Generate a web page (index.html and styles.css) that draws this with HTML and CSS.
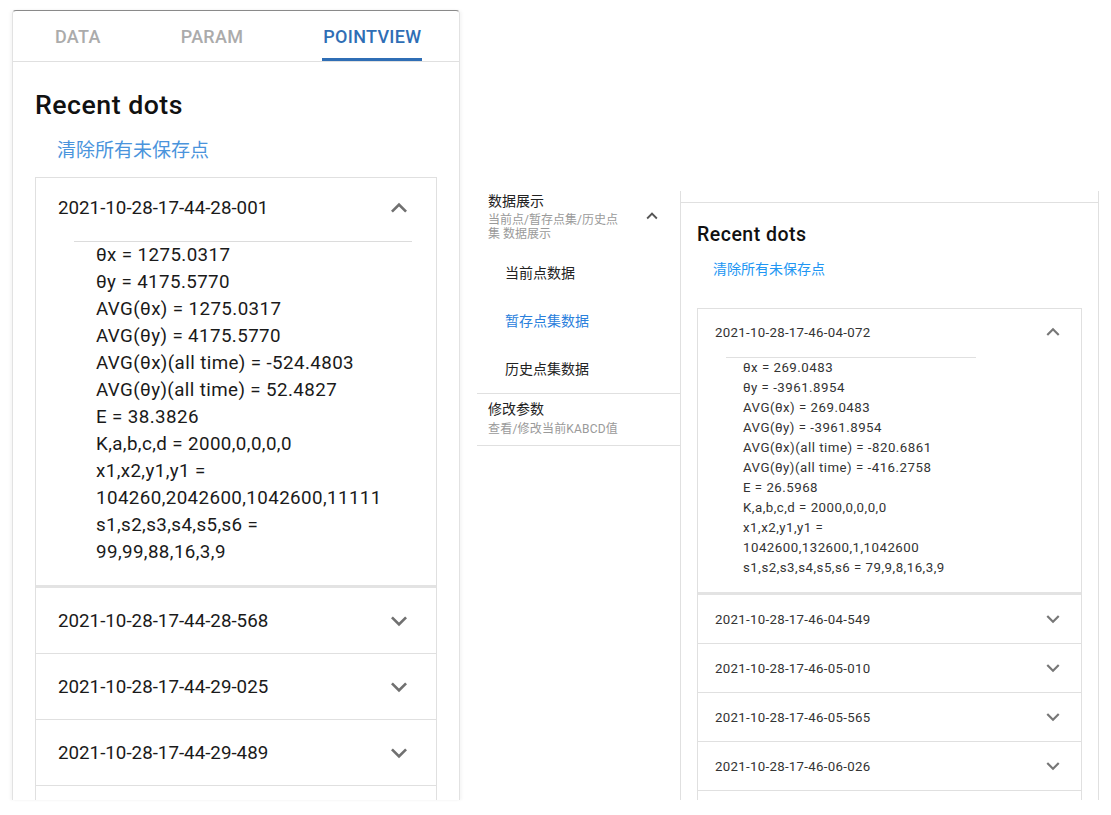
FILE: index.html
```html
<!DOCTYPE html>
<html lang="zh-CN">
<head>
<meta charset="utf-8">
<title>Recent dots</title>
<link rel="stylesheet" href="styles.css">
</head>
<body>
<div class="stage">
  <section class="phone">
    <nav class="tabs">
      <div class="tab">DATA</div>
      <div class="tab">PARAM</div>
      <div class="tab active">POINTVIEW</div>
    </nav>
    <div class="phone-body">
      <h1 class="title-lg">Recent dots</h1>
      <a class="link-lg">清除所有未保存点</a>
      <div class="acc-lg">
        <div class="acc-lg-open">
          <div class="acc-lg-head">
            <span>2021-10-28-17-44-28-001</span>
            <svg class="chev-lg" viewBox="0 0 24 24"><path d="M12 8l-6 6 1.41 1.41L12 10.83l4.59 4.58L18 14z"/></svg>
          </div>
          <div class="acc-lg-rule"></div>
          <div class="acc-lg-body">
            <div>θx = 1275.0317</div>
            <div>θy = 4175.5770</div>
            <div>AVG(θx) = 1275.0317</div>
            <div>AVG(θy) = 4175.5770</div>
            <div>AVG(θx)(all time) = -524.4803</div>
            <div>AVG(θy)(all time) = 52.4827</div>
            <div>E = 38.3826</div>
            <div>K,a,b,c,d = 2000,0,0,0,0</div>
            <div>x1,x2,y1,y1 =</div>
            <div>104260,2042600,1042600,11111</div>
            <div>s1,s2,s3,s4,s5,s6 =</div>
            <div>99,99,88,16,3,9</div>
          </div>
        </div>
        <div class="acc-lg-item"><span>2021-10-28-17-44-28-568</span><svg class="chev-lg" viewBox="0 0 24 24"><path d="M16.59 8.59L12 13.17 7.41 8.59 6 10l6 6 6-6z"/></svg></div>
        <div class="acc-lg-item"><span>2021-10-28-17-44-29-025</span><svg class="chev-lg" viewBox="0 0 24 24"><path d="M16.59 8.59L12 13.17 7.41 8.59 6 10l6 6 6-6z"/></svg></div>
        <div class="acc-lg-item"><span>2021-10-28-17-44-29-489</span><svg class="chev-lg" viewBox="0 0 24 24"><path d="M16.59 8.59L12 13.17 7.41 8.59 6 10l6 6 6-6z"/></svg></div>
        <div class="acc-lg-item"></div>
      </div>
    </div>
  </section>

  <aside class="menu">
    <div class="menu-group">
      <div class="menu-head">
        <div class="menu-text">
          <div class="menu-title">数据展示</div>
          <div class="menu-sub menu-sub-wrap">当前点/暂存点集/历史点集 数据展示</div>
        </div>
        <svg class="chev-md" viewBox="0 0 24 24"><path d="M12 8l-6 6 1.41 1.41L12 10.83l4.59 4.58L18 14z"/></svg>
      </div>
      <div class="menu-item">当前点数据</div>
      <div class="menu-item selected">暂存点集数据</div>
      <div class="menu-item">历史点集数据</div>
    </div>
    <div class="menu-group2">
      <div class="menu-title">修改参数</div>
      <div class="menu-sub">查看/修改当前KABCD值</div>
    </div>
  </aside>

  <section class="panel">
    <div class="panel-top"></div>
    <div class="panel-body">
      <h2 class="title-sm">Recent dots</h2>
      <a class="link-sm">清除所有未保存点</a>
      <div class="acc-sm">
        <div class="acc-sm-open">
          <div class="acc-sm-head">
            <span>2021-10-28-17-46-04-072</span>
            <svg class="chev-sm" viewBox="0 0 24 24"><path d="M12 8l-6 6 1.41 1.41L12 10.83l4.59 4.58L18 14z"/></svg>
          </div>
          <div class="acc-sm-rule"></div>
          <div class="acc-sm-body">
            <div>θx = 269.0483</div>
            <div>θy = -3961.8954</div>
            <div>AVG(θx) = 269.0483</div>
            <div>AVG(θy) = -3961.8954</div>
            <div>AVG(θx)(all time) = -820.6861</div>
            <div>AVG(θy)(all time) = -416.2758</div>
            <div>E = 26.5968</div>
            <div>K,a,b,c,d = 2000,0,0,0,0</div>
            <div>x1,x2,y1,y1 =</div>
            <div>1042600,132600,1,1042600</div>
            <div>s1,s2,s3,s4,s5,s6 = 79,9,8,16,3,9</div>
          </div>
        </div>
        <div class="acc-sm-item"><span>2021-10-28-17-46-04-549</span><svg class="chev-sm" viewBox="0 0 24 24"><path d="M16.59 8.59L12 13.17 7.41 8.59 6 10l6 6 6-6z"/></svg></div>
        <div class="acc-sm-item"><span>2021-10-28-17-46-05-010</span><svg class="chev-sm" viewBox="0 0 24 24"><path d="M16.59 8.59L12 13.17 7.41 8.59 6 10l6 6 6-6z"/></svg></div>
        <div class="acc-sm-item"><span>2021-10-28-17-46-05-565</span><svg class="chev-sm" viewBox="0 0 24 24"><path d="M16.59 8.59L12 13.17 7.41 8.59 6 10l6 6 6-6z"/></svg></div>
        <div class="acc-sm-item"><span>2021-10-28-17-46-06-026</span><svg class="chev-sm" viewBox="0 0 24 24"><path d="M16.59 8.59L12 13.17 7.41 8.59 6 10l6 6 6-6z"/></svg></div>
        <div class="acc-sm-item"></div>
      </div>
    </div>
  </section>
</div>
</body>
</html>
```

FILE: styles.css
```css
html, body {
  margin: 0;
  padding: 0;
  background: #ffffff;
}
body {
  width: 1111px;
  height: 815px;
  overflow: hidden;
  font-family: Roboto, "Noto Sans CJK SC", sans-serif;
  color: #1a1a1a;
}
.stage {
  display: flex;
  align-items: flex-start;
}

/* ---------- left phone ---------- */
.phone {
  margin: 10px 0 0 12px;
  width: 448px;
  height: 790px;
  box-sizing: border-box;
  border-top: 1px solid #8a8a8a;
  border-left: 1px solid #e2e2e2;
  border-right: 1px solid #e2e2e2;
  border-radius: 4px 4px 0 0;
  box-shadow: -2px 0 3px rgba(0,0,0,0.04), 2px 0 3px rgba(0,0,0,0.04);
  overflow: hidden;
}
.tabs {
  display: flex;
  height: 50px;
  padding-left: 2px;
  border-bottom: 1px solid #e0e0e0;
}
.tab {
  position: relative;
  display: flex;
  align-items: center;
  padding: 0 40px;
  font-size: 18px;
  font-weight: 500;
  color: #ababab;
  letter-spacing: 0.3px;
}
.tab.active {
  color: #2f6eb5;
}
.tab.active::after {
  content: "";
  position: absolute;
  left: 39px;
  right: 39px;
  bottom: 0;
  height: 3px;
  background: #2f6eb5;
}
.phone-body {
  padding-left: 22px;
}
.title-lg {
  margin: 28px 0 0 0;
  font-size: 26.7px;
  line-height: 30px;
  font-weight: 500;
  letter-spacing: 0.5px;
  color: #111;
}
.link-lg {
  display: block;
  margin: 19px 0 0 22px;
  font-size: 19px;
  line-height: 24px;
  color: #4a94dc;
}
.acc-lg {
  margin-top: 14px;
  width: 402px;
  box-sizing: border-box;
  border-top: 1px solid #e0e0e0;
  border-left: 1px solid #e0e0e0;
  border-right: 1px solid #e0e0e0;
}
.acc-lg-open {
  border-bottom: 3px solid #e3e3e3;
  padding-bottom: 19px;
}
.acc-lg-head, .acc-lg-item {
  display: flex;
  align-items: center;
  justify-content: space-between;
  height: 59px;
  padding: 0 21px 0 22px;
  font-size: 18.75px;
}
.acc-lg-item {
  height: 65px;
  border-bottom: 1px solid #e0e0e0;
}
.chev-lg {
  width: 32px;
  height: 32px;
  fill: #707070;
}
.acc-lg-rule {
  margin: 4px 24px 0 38px;
  height: 1px;
  background: #dcdcdc;
}
.acc-lg-body {
  padding-left: 60px;
  font-size: 18.75px;
  letter-spacing: 0.4px;
  line-height: 27px;
  color: #1a1a1a;
}

/* ---------- middle menu ---------- */
.menu {
  margin: 191px 0 0 17px;
  width: 203px;
}
.menu-head {
  display: flex;
  align-items: flex-start;
  justify-content: space-between;
  padding: 0 17px 0 11px;
  height: 57px;
}
.menu-text {
  width: 140px;
}
.menu-title {
  font-size: 14px;
  line-height: 20px;
  color: #222;
}
.menu-sub {
  margin-top: 4px;
  font-size: 12px;
  line-height: 13.5px;
  letter-spacing: 0.2px;
  color: #9a9a9a;
}
.menu-sub-wrap {
  margin-top: 3px;
  letter-spacing: 0;
}
.chev-md {
  margin-top: 14px;
  width: 22px;
  height: 22px;
  fill: #555;
}
.menu-item {
  display: flex;
  align-items: center;
  height: 48px;
  padding-left: 28px;
  font-size: 14px;
  color: #222;
}
.menu-item.selected {
  color: #2a80dc;
}
.menu-group {
  padding-bottom: 1px;
  border-bottom: 1px solid #e0e0e0;
}
.menu-group2 {
  padding: 5px 0 8px 11px;
  border-bottom: 1px solid #e0e0e0;
}

/* ---------- right panel ---------- */
.panel {
  margin-top: 191px;
  width: 419px;
  height: 609px;
  box-sizing: border-box;
  border-left: 1px solid #e0e0e0;
  border-right: 1px solid #e0e0e0;
  overflow: hidden;
}
.panel-top {
  height: 11px;
  border-bottom: 1px solid #e0e0e0;
}
.panel-body {
  padding-left: 16px;
}
.title-sm {
  margin: 20px 0 0 0;
  font-size: 19.5px;
  line-height: 24px;
  font-weight: 500;
  letter-spacing: 0.5px;
  color: #111;
}
.link-sm {
  display: block;
  margin: 12px 0 0 16px;
  font-size: 14px;
  line-height: 20px;
  color: #2196f3;
}
.acc-sm {
  margin-top: 29px;
  width: 385px;
  box-sizing: border-box;
  border-top: 1px solid #e0e0e0;
  border-left: 1px solid #e0e0e0;
  border-right: 1px solid #e0e0e0;
}
.acc-sm-open {
  border-bottom: 3px solid #e3e3e3;
  padding-bottom: 14px;
}
.acc-sm-head, .acc-sm-item {
  display: flex;
  align-items: center;
  justify-content: space-between;
  height: 46px;
  padding: 0 15px 0 17px;
  font-size: 13.25px;
  letter-spacing: 0.3px;
  color: #333;
}
.acc-sm-item {
  height: 48px;
  border-bottom: 1px solid #e0e0e0;
}
.chev-sm {
  width: 26px;
  height: 26px;
  fill: #777;
}
.acc-sm-rule {
  margin: 2px 0 0 28px;
  width: 250px;
  height: 1px;
  background: #e0e0e0;
}
.acc-sm-body {
  padding-left: 45px;
  font-size: 13.25px;
  letter-spacing: 0.5px;
  line-height: 20px;
  color: #333;
}
```
